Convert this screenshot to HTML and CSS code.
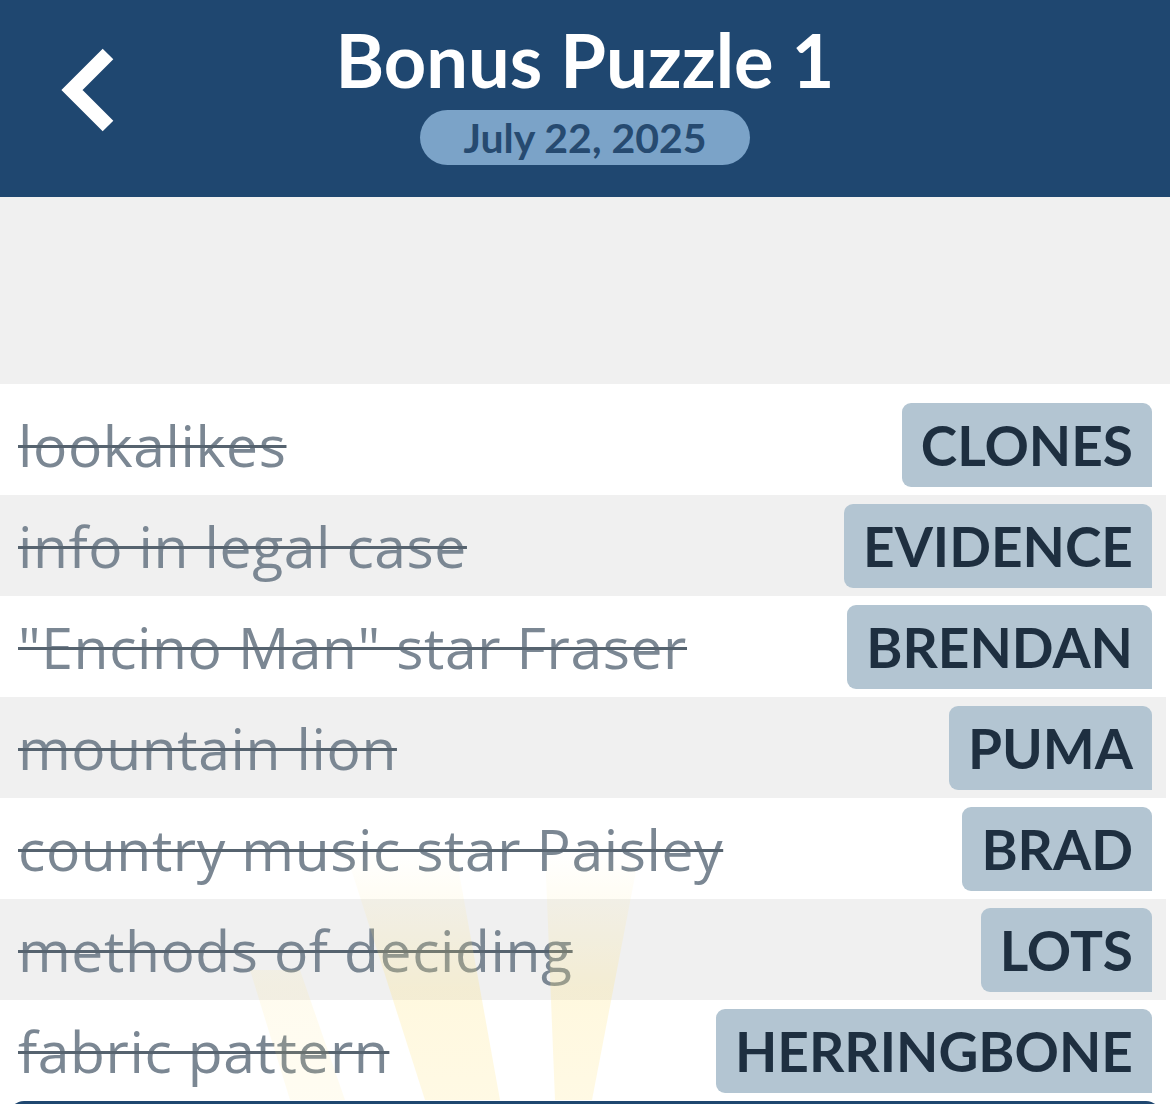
FILE: index.html
```html
<!DOCTYPE html>
<html lang="en">
<head>
    <meta charset="UTF-8">
    <meta name="viewport" content="width=device-width, initial-scale=1.0">
    <title>Bonus Puzzle 1</title>
    <link rel="stylesheet" href="styles.css">
</head>
<body>
    <header class="top-bar">
        <a class="back-btn" href="#" aria-label="Back">
            <svg width="60" height="90" viewBox="0 0 60 90">
                <polyline points="50,10 14,46 50,82" fill="none" stroke="#fff" stroke-width="15" stroke-linejoin="miter" stroke-linecap="butt"/>
            </svg>
        </a>
        <div class="title-box">
            <h1>Bonus Puzzle 1</h1>
            <span class="date-pill">July 22, 2025</span>
        </div>
    </header>

    <div class="spacer"></div>

    <!-- Lista de pistas resueltas -->
    <div class="clue-list">
        <div class="clue-row">
            <span class="clue">lookalikes</span>
            <span class="answer">CLONES</span>
        </div>
        <div class="clue-row alt">
            <span class="clue">info in legal case</span>
            <span class="answer">EVIDENCE</span>
        </div>
        <div class="clue-row">
            <span class="clue">"Encino Man" star Fraser</span>
            <span class="answer">BRENDAN</span>
        </div>
        <div class="clue-row alt">
            <span class="clue">mountain lion</span>
            <span class="answer">PUMA</span>
        </div>
        <div class="clue-row">
            <span class="clue">country music star Paisley</span>
            <span class="answer">BRAD</span>
        </div>
        <div class="clue-row alt">
            <span class="clue">methods of deciding</span>
            <span class="answer">LOTS</span>
        </div>
        <div class="clue-row">
            <span class="clue">fabric pattern</span>
            <span class="answer">HERRINGBONE</span>
        </div>

        <div class="rays">
            <div class="ray ray-one"></div>
            <div class="ray ray-two"></div>
            <div class="ray ray-three"></div>
        </div>
    </div>

    <div class="bottom-bar"></div>
</body>
</html>
```

FILE: styles.css
```css
body {
    font-family: Lato, "Noto Sans", sans-serif;
    margin: 0;
    padding: 0;
    background-color: #fff;
    color: #1e2f40;
    overflow: hidden;
}
.top-bar {
    background-color: #1f4770;
    height: 197px;
    display: grid;
    grid-template-columns: 1fr auto 1fr;
    align-items: start;
}
.back-btn {
    display: block;
    margin: 44px 0 0 58px;
    width: 60px;
    height: 90px;
}
.title-box {
    display: flex;
    flex-direction: column;
    align-items: center;
    padding-top: 16px;
}
.title-box h1 {
    margin: 0;
    color: #fff;
    font-size: 74px;
    font-weight: 700;
    line-height: 88px;
}
.date-pill {
    margin-top: 6px;
    background-color: #7ba3c8;
    color: #264a70;
    font-size: 41px;
    font-weight: 700;
    line-height: 55px;
    height: 55px;
    padding: 0 43px;
    border-radius: 28px;
}
.spacer {
    height: 187px;
    background-color: #f0f0f0;
}
.clue-list {
    position: relative;
    padding: 10px 4px 0 0;
    background-color: #fff;
}
.clue-row {
    height: 101px;
    display: flex;
    align-items: center;
    justify-content: space-between;
    padding: 0 14px 0 18px;
    background-color: #fff;
}
.clue-row.alt {
    background-color: #f0f0f0;
}
.clue {
    font-family: "Open Sans", sans-serif;
    font-size: 57px;
    letter-spacing: 0.6px;
    color: #7b8793;
    text-decoration: line-through;
    text-decoration-color: #56636f;
    text-decoration-thickness: 3px;
    white-space: nowrap;
}
.answer {
    background-color: #b3c5d2;
    color: #1e2f40;
    font-size: 55px;
    font-weight: 700;
    line-height: 84px;
    height: 84px;
    padding: 0 19px;
    border-radius: 9px 9px 0 9px;
    white-space: nowrap;
}
.rays {
    position: absolute;
    left: 0;
    top: 466px;
    width: 100%;
    height: 250px;
    pointer-events: none;
}
.ray {
    position: absolute;
    inset: 0;
    background: linear-gradient(to bottom, rgba(255, 228, 130, 0), rgba(255, 226, 120, 0.24) 55%, rgba(255, 226, 120, 0.2));
}
.ray-one {
    clip-path: polygon(345px 0, 455px 0, 500px 250px, 425px 250px);
}
.ray-two {
    clip-path: polygon(545px 0, 640px 0, 592px 250px, 555px 250px);
}
.ray-three {
    opacity: 0.5;
    clip-path: polygon(250px 120px, 300px 120px, 345px 250px, 290px 250px);
}
.bottom-bar {
    height: 20px;
    margin: 0 10px;
    background-color: #1f4770;
    border-radius: 14px 14px 0 0;
}
```
